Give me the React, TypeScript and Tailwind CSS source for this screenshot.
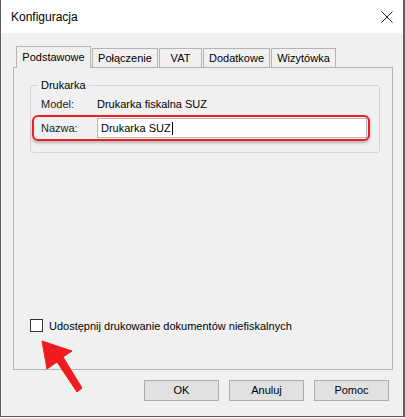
import { FC } from "react";

const tabs = [
  { title: "Podstawowe", w: "w-[75px]", active: true },
  { title: "Połączenie", w: "w-[66px]" },
  { title: "VAT", w: "w-[43px]" },
  { title: "Dodatkowe", w: "w-[67px]" },
  { title: "Wizytówka", w: "w-[65px]" },
];

const Button: FC<{ label: string }> = ({ label }) => (
  <button
    type="button"
    className="flex h-[21px] w-[75px] items-center justify-center border border-[#adadad] bg-[#e1e1e1] text-[11px] text-black"
  >
    {label}
  </button>
);

const Arrow = () => (
  <svg className="pointer-events-none absolute left-0 top-0" width="405" height="419" viewBox="0 0 405 419">
    <polygon
      points="42,341 72,351 63,357 82,388 77,392 57,362 47,369"
      fill="#f01b1f"
      stroke="#f01b1f"
      strokeWidth="1"
      strokeLinejoin="round"
    />
  </svg>
);

export default function App() {
  return (
    <div
      className="relative h-[419px] w-[405px] overflow-hidden bg-[#f0f0f0] text-black"
      style={{ fontFamily: '"Liberation Sans", Arial, sans-serif' }}
    >
      <div className="flex h-[417px] flex-col border-b border-l border-r-2 border-[#5f5f5f]">
        {/* title bar */}
        <div className="flex h-[33px] shrink-0 items-center justify-between bg-white pl-[10px] pr-[10px]">
          <span className="text-[12px]">Konfiguracja</span>
          <svg width="12" height="12" viewBox="0 0 12 12">
            <path d="M0.5 0.5 L11.5 11.5 M11.5 0.5 L0.5 11.5" stroke="#222" strokeWidth="1" />
          </svg>
        </div>

        <div className="flex flex-1 flex-col pl-[12px] pr-[10px] pt-[13px]">
          {/* tabs */}
          <div className="flex h-[21px] items-end pl-[3px]">
            {tabs.map((t) =>
              t.active ? (
                <div
                  key={t.title}
                  className={`relative z-10 -mb-px flex h-[22px] ${t.w} items-center justify-center border border-b-0 border-[#b4b4b4] bg-[#f0f0f0] pb-[1px] text-[11px]`}
                >
                  {t.title}
                </div>
              ) : (
                <div
                  key={t.title}
                  className={`ml-[1px] flex h-[19px] ${t.w} items-center justify-center border border-b-0 border-[#b4b4b4] bg-[#f0f0f0] text-[11px]`}
                >
                  {t.title}
                </div>
              )
            )}
          </div>

          {/* panel */}
          <div className="flex h-[303px] w-[380px] flex-col border border-[#b4b4b4] bg-[#f0f0f0] pl-[16px] pr-[12px] pt-[17px]">
            <div className="relative h-[68px] w-[350px] rounded-[3px] border border-[#d5d5d5] pl-[10px] pt-[9px]">
              <span className="absolute -top-[8px] left-[7px] bg-[#f0f0f0] px-[3px] text-[11px] leading-[14px]">
                Drukarka
              </span>
              <div className="flex h-[18px] items-center text-[11px]">
                <span className="w-[56px] text-[#222]">Model:</span>
                <span>Drukarka fiskalna SUZ</span>
              </div>
              <div className="-ml-[9px] mt-[2px] flex h-[26px] w-[338px] items-center rounded-[6px] border-2 border-[#ee1c24] pl-[7px] shadow-[0_2px_3px_rgba(0,0,0,0.25)]">
                <span className="w-[56px] text-[11px] text-[#222]">Nazwa:</span>
                <div className="flex h-[20px] w-[270px] items-center border border-[#b8b8b8] bg-white pl-[3px] text-[11px]">
                  Drukarka SUZ
                  <span className="ml-[1px] h-[13px] w-px bg-black" />
                </div>
              </div>
            </div>

            <div className="flex-1" />

            <label className="mb-[35px] flex items-center gap-[6px] text-[11px]">
              <span className="h-[13px] w-[13px] border border-[#333] bg-white" />
              <span>Udostępnij drukowanie dokumentów niefiskalnych</span>
            </label>
          </div>

          {/* buttons */}
          <div className="mt-[10px] flex justify-end gap-[10px] pr-[4px]">
            <Button label="OK" />
            <Button label="Anuluj" />
            <Button label="Pomoc" />
          </div>
        </div>
      </div>
      <Arrow />
    </div>
  );
}
